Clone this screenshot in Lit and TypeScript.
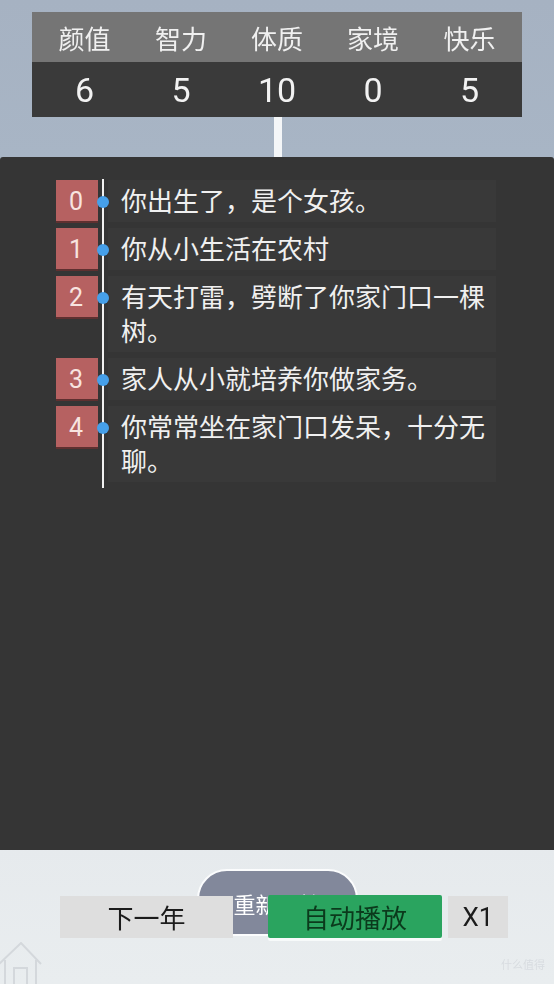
import { LitElement, html, css } from "lit";
import { customElement } from "lit/decorators.js";

const STATS = [
  ["颜值", "6"],
  ["智力", "5"],
  ["体质", "10"],
  ["家境", "0"],
  ["快乐", "5"],
];
const EVENTS = [
  "你出生了\uFF0C是个女孩。",
  "你从小生活在农村",
  "有天打雷\uFF0C劈断了你家门口一棵树。",
  "家人从小就培养你做家务。",
  "你常常坐在家门口发呆\uFF0C十分无聊。",
];

@customElement("app-root")
export class AppRoot extends LitElement {
  static styles = css`
    :host {
      display: block;
      width: 554px;
      height: 984px;
      overflow: hidden;
      font-family: Roboto, "Noto Sans CJK SC", sans-serif;
      background: linear-gradient(180deg, #a6b2c2 0%, #a8b5c5 16%, #e6eaed 86%, #e9edef 100%);
    }
    .page { display: flex; flex-direction: column; height: 984px; padding-top: 12px; box-sizing: border-box; filter: blur(0.35px); }
    .stats { margin: 0 32px; display: grid; grid-template-columns: repeat(5, 1fr); }
    .label {
      height: 50px; background: #757575; color: #f0f0f0; font-size: 26px;
      display: flex; align-items: center; justify-content: center;
    }
    .value {
      height: 55px; background: #3a3a3a; color: #f2f2f2; font-size: 34px;
      display: flex; align-items: center; justify-content: center;
    }
    .label:nth-child(5n + 1), .value:nth-child(5n + 1) { padding-left: 7px; }
    .label:nth-child(5n + 2), .value:nth-child(5n + 2) { padding-left: 4px; }
    .label:nth-child(5n + 4), .value:nth-child(5n + 4) { padding-right: 4px; }
    .label:nth-child(5n), .value:nth-child(5n) { padding-right: 7px; }
    .connector { width: 8px; height: 40px; background: #f4f6f8; margin-left: 274px; flex: none; }
    .panel {
      height: 693px; flex: none; background: #353535; box-sizing: border-box;
      padding: 23px 58px 0 56px; border-radius: 3px 3px 0 0;
    }
    .timeline { position: relative; display: flex; flex-direction: column; gap: 6px; padding-bottom: 6px; }
    .timeline::before {
      content: ""; position: absolute; left: 46px; top: -1px; bottom: 0; width: 2px; background: #f2f2f2;
    }
    .row { display: flex; align-items: flex-start; position: relative; }
    .idx {
      width: 42px; height: 43px; margin-bottom: -1px; flex: none; background: #b66161; color: #f8e4e0; font-size: 25px;
      display: flex; align-items: center; justify-content: center; border-bottom: 2px solid #5e3030;
      box-sizing: border-box; padding: 1px 2px 0 0;
    }
    .dot {
      position: absolute; left: 41px; top: 16px; width: 12px; height: 12px;
      border-radius: 50%; background: #46a0ea;
    }
    .text {
      margin-left: 10px; flex: 1; background: #393939; color: #f0f0f0;
      font-size: 26px; line-height: 34px; padding: 5px 8px 3px 13px; min-height: 42px; box-sizing: border-box;
    }
    .footer { position: relative; flex: 1; }
    .restart {
      position: absolute; left: 197px; top: 19px; width: 161px; height: 67px; box-sizing: border-box;
      border: 2px solid #fbfcfd; border-radius: 30px 30px 6px 6px; background: #82889b; color: #fff;
      font-size: 22px; display: flex; align-items: center; justify-content: center;
    }
    .controls { position: relative; display: flex; align-items: center; padding: 45px 0 0 60px; }
    .btn {
      height: 42px; display: flex; align-items: center; justify-content: center;
      font-size: 26px; color: #1c1c1c; background: #dedede; box-sizing: border-box;
    }
    .next { width: 173px; }
    .auto {
      width: 174px; height: 43px; margin-left: 35px; background: #2aa45f; color: #0b3a1c;
      border-radius: 2px; box-shadow: 0 3px 0 #f7fafa;
    }
    .speed { width: 60px; margin-left: 6px; }
    .bottom { position: absolute; left: 0; right: 0; bottom: 0; height: 42px; display: flex; justify-content: space-between; align-items: flex-end; }
    .home { width: 44px; height: 42px; display: block; }
    .mark { font-size: 11px; color: #d8dce0; padding: 0 9px 12px 0; }
  `;

  render() {
    return html`
      <div class="page">
        <div class="stats">
          ${STATS.map(([l]) => html`<div class="label">${l}</div>`)}
          ${STATS.map(([, v]) => html`<div class="value">${v}</div>`)}
        </div>
        <div class="connector"></div>
        <div class="panel">
          <div class="timeline">
            ${EVENTS.map(
              (t, i) => html`<div class="row">
                <div class="idx">${i}</div>
                <div class="dot"></div>
                <div class="text">${t}</div>
              </div>`
            )}
          </div>
        </div>
        <div class="footer">
          <div class="restart">重新开始</div>
          <div class="controls">
            <div class="btn next">下一年</div>
            <div class="btn auto">自动播放</div>
            <div class="btn speed">X1</div>
          </div>
          <div class="bottom">
            <svg class="home" viewBox="0 0 44 42" fill="none" stroke="#d4d8dc" stroke-width="2">
              <path d="M-1 22 L21 1 L41 22" />
              <path d="M5 18 V42 M36 18 V42" />
              <path d="M14 42 V26 H27 V42" />
            </svg>
            <div class="mark">什么值得</div>
          </div>
        </div>
      </div>
    `;
  }
}
